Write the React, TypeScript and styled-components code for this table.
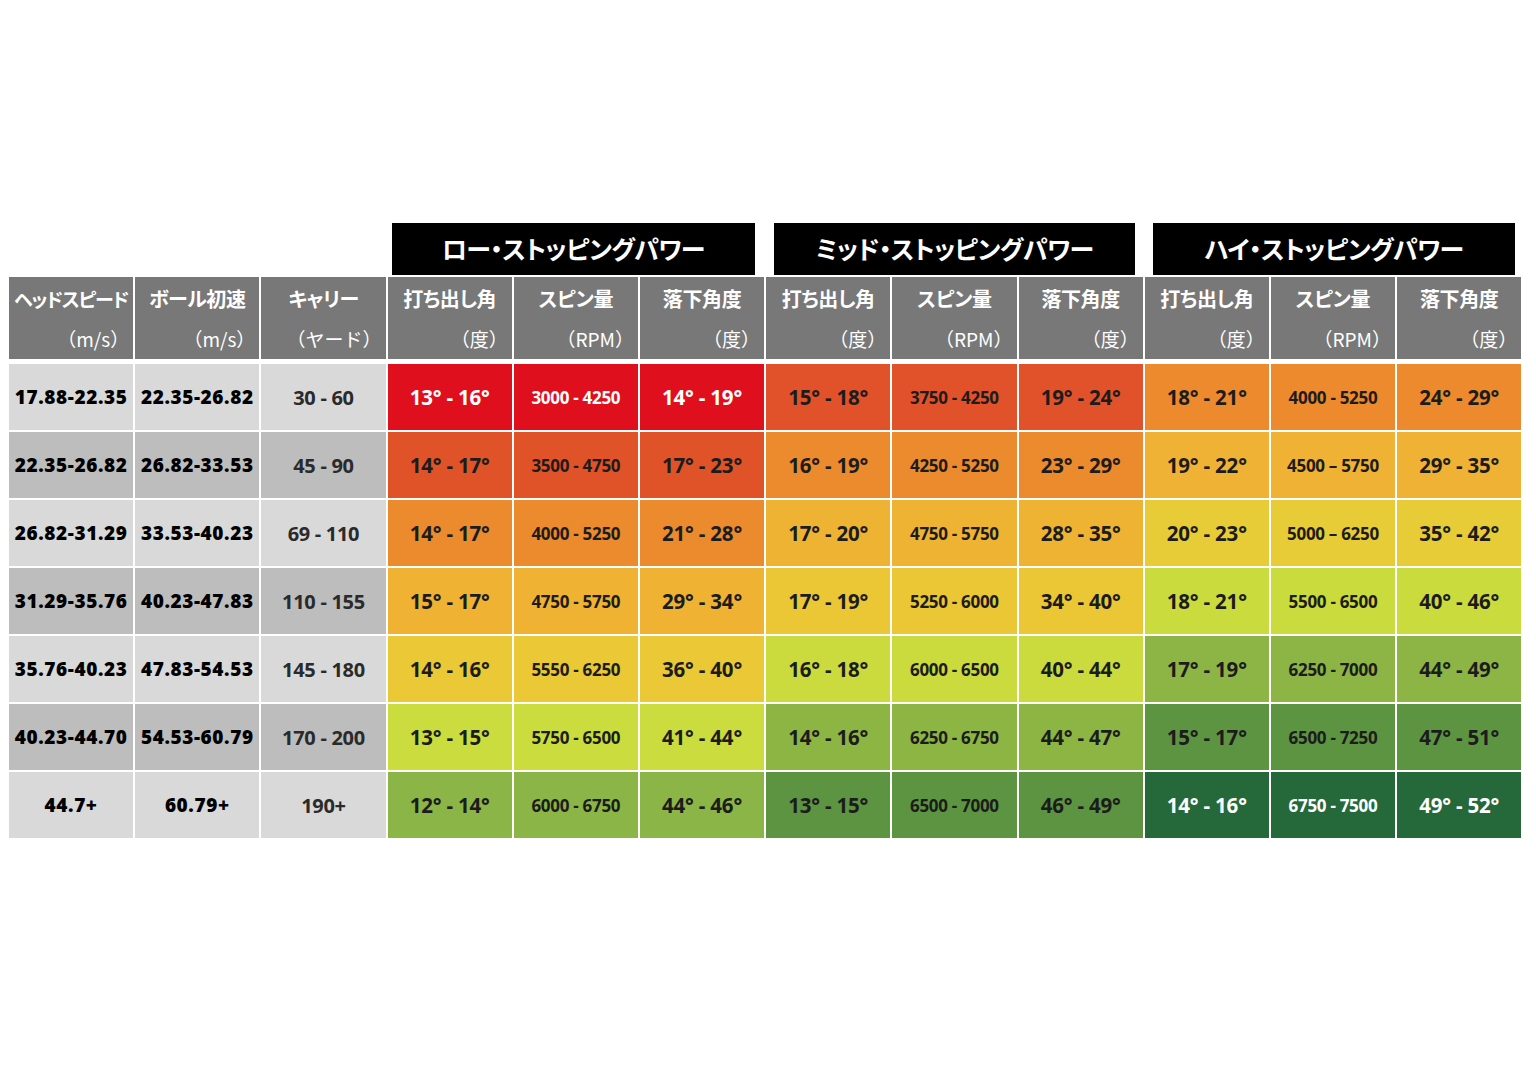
import React from "react";
import styled, { createGlobalStyle } from "styled-components";

const GlobalStyle = createGlobalStyle`
  html, body { margin: 0; padding: 0; background: #ffffff; }
  body { font-family: "Noto Sans CJK JP", "Open Sans", sans-serif; }
`;

const COLS = "repeat(12, 124.2px)";

const Page = styled.div`
  width: 1536px;
  height: 1075px;
  box-sizing: border-box;
  padding: 223px 0 0 9px;
  background: #ffffff;
`;

const Table = styled.div`
  display: flex;
  flex-direction: column;
`;

const GroupRow = styled.div`
  display: grid;
  grid-template-columns: ${COLS};
  column-gap: 2px;
  height: 52px;
  margin-bottom: 2px;
`;

const Spacer = styled.div`
  grid-column: span 3;
`;

const GroupTitle = styled.div<{ $l: number; $r: number }>`
  grid-column: span 3;
  margin: 0 ${(p) => p.$r}px 0 ${(p) => p.$l}px;
  background: #000000;
  color: #ffffff;
  display: flex;
  align-items: center;
  justify-content: center;
  font-family: "Noto Sans CJK JP", sans-serif;
  font-weight: 700;
  font-size: 25px;
  font-feature-settings: "palt";
  letter-spacing: -0.6px;
  padding-bottom: 2px;
`;

const HeadRow = styled.div`
  display: grid;
  grid-template-columns: ${COLS};
  column-gap: 2px;
  height: 82px;
  margin-bottom: 5px;
`;

const HeadCell = styled.div`
  background: #787878;
  color: #ffffff;
  display: flex;
  flex-direction: column;
  padding: 8px 0 6px;
  box-sizing: border-box;
  font-family: "Noto Sans CJK JP", sans-serif;
`;

const HeadTitle = styled.div<{ $tight?: boolean }>`
  height: 28px;
  line-height: 28px;
  text-align: center;
  font-size: ${(p) => (p.$tight ? "19px" : "20px")};
  font-weight: 700;
  font-feature-settings: "palt";
  letter-spacing: ${(p) => (p.$tight ? "-1.2px" : "-0.4px")};
  white-space: nowrap;
`;

const HeadUnit = styled.div`
  margin-top: 12px;
  height: 28px;
  line-height: 28px;
  text-align: right;
  padding-right: 4px;
  font-size: 19px;
  font-weight: 400;
  white-space: nowrap;
`;

const DataRow = styled.div`
  display: grid;
  grid-template-columns: ${COLS};
  column-gap: 2px;
  height: 66px;
  margin-bottom: 2px;
`;

const Cell = styled.div<{ $bg: string; $fg: string }>`
  background: ${(p) => p.$bg};
  color: ${(p) => p.$fg};
  display: flex;
  align-items: center;
  justify-content: center;
  font-family: "Open Sans", "Noto Sans", sans-serif;
  white-space: nowrap;
`;

const SpeedCell = styled(Cell)`
  font-size: 19px;
  font-weight: 800;
  letter-spacing: 0.6px;
`;

const CarryCell = styled(Cell)`
  font-size: 20px;
  font-weight: 700;
  letter-spacing: -0.3px;
`;

const AngleCell = styled(Cell)`
  font-size: 20.5px;
  font-weight: 700;
  letter-spacing: -0.2px;
`;

const RpmCell = styled(Cell)`
  font-size: 17px;
  font-weight: 700;
  letter-spacing: -0.3px;
`;

const headers: [string, string][] = [
  ["ヘッドスピード", "（m/s）"],
  ["ボール初速", "（m/s）"],
  ["キャリー", "（ヤード）"],
  ["打ち出し角", "（度）"],
  ["スピン量", "（RPM）"],
  ["落下角度", "（度）"],
  ["打ち出し角", "（度）"],
  ["スピン量", "（RPM）"],
  ["落下角度", "（度）"],
  ["打ち出し角", "（度）"],
  ["スピン量", "（RPM）"],
  ["落下角度", "（度）"],
];

type Row = {
  hs: string;
  bs: string;
  carry: string;
  vals: string[];
  colors: [string, string, string];
};

const rows: Row[] = [
  {
    hs: "17.88-22.35",
    bs: "22.35-26.82",
    carry: "30 - 60",
    vals: ["13° - 16°", "3000 - 4250", "14° - 19°", "15° - 18°", "3750 - 4250", "19° - 24°", "18° - 21°", "4000 - 5250", "24° - 29°"],
    colors: ["#df0f1d", "#e1522a", "#ec8a2d"],
  },
  {
    hs: "22.35-26.82",
    bs: "26.82-33.53",
    carry: "45 - 90",
    vals: ["14° - 17°", "3500 - 4750", "17° - 23°", "16° - 19°", "4250 - 5250", "23° - 29°", "19° - 22°", "4500 – 5750", "29° - 35°"],
    colors: ["#e05228", "#ec8a2e", "#efb234"],
  },
  {
    hs: "26.82-31.29",
    bs: "33.53-40.23",
    carry: "69 - 110",
    vals: ["14° - 17°", "4000 - 5250", "21° - 28°", "17° - 20°", "4750 - 5750", "28° - 35°", "20° - 23°", "5000 – 6250", "35° - 42°"],
    colors: ["#ec8a2e", "#efb334", "#e8cc37"],
  },
  {
    hs: "31.29-35.76",
    bs: "40.23-47.83",
    carry: "110 - 155",
    vals: ["15° - 17°", "4750 - 5750", "29° - 34°", "17° - 19°", "5250 - 6000", "34° - 40°", "18° - 21°", "5500 - 6500", "40° - 46°"],
    colors: ["#efb233", "#ebc736", "#cadb3d"],
  },
  {
    hs: "35.76-40.23",
    bs: "47.83-54.53",
    carry: "145 - 180",
    vals: ["14° - 16°", "5550 - 6250", "36° - 40°", "16° - 18°", "6000 - 6500", "40° - 44°", "17° - 19°", "6250 - 7000", "44° - 49°"],
    colors: ["#eac836", "#cbdb3d", "#8cb545"],
  },
  {
    hs: "40.23-44.70",
    bs: "54.53-60.79",
    carry: "170 - 200",
    vals: ["13° - 15°", "5750 - 6500", "41° - 44°", "14° - 16°", "6250 - 6750", "44° - 47°", "15° - 17°", "6500 - 7250", "47° - 51°"],
    colors: ["#cadc3e", "#8db544", "#5d9442"],
  },
  {
    hs: "44.7+",
    bs: "60.79+",
    carry: "190+",
    vals: ["12° - 14°", "6000 - 6750", "44° - 46°", "13° - 15°", "6500 - 7000", "46° - 49°", "14° - 16°", "6750 - 7500", "49° - 52°"],
    colors: ["#8bb546", "#5d9442", "#25693a"],
  },
];

const groups = [
  { title: "ロー・ストッピングパワー", l: 4, r: 9 },
  { title: "ミッド・ストッピングパワー", l: 8, r: 8 },
  { title: "ハイ・ストッピングパワー", l: 8, r: 6 },
];

export default function App() {
  return (
    <Page>
      <GlobalStyle />
      <Table>
        <GroupRow>
          <Spacer />
          {groups.map((g) => (
            <GroupTitle key={g.title} $l={g.l} $r={g.r}>
              {g.title}
            </GroupTitle>
          ))}
        </GroupRow>
        <HeadRow>
          {headers.map(([t, u], i) => (
            <HeadCell key={i}>
              <HeadTitle $tight={t.length > 6}>{t}</HeadTitle>
              <HeadUnit>{u}</HeadUnit>
            </HeadCell>
          ))}
        </HeadRow>
        {rows.map((r, ri) => {
          const grey = ri % 2 === 0 ? "#d9d9d9" : "#bdbdbd";
          return (
            <DataRow key={ri}>
              <SpeedCell $bg={grey} $fg="#000000">{r.hs}</SpeedCell>
              <SpeedCell $bg={grey} $fg="#000000">{r.bs}</SpeedCell>
              <CarryCell $bg={grey} $fg="#2a2a2a">{r.carry}</CarryCell>
              {r.vals.map((v, vi) => {
                const g = Math.floor(vi / 3);
                const bg = r.colors[g];
                const white = (ri === 0 && g === 0) || (ri === 6 && g === 2);
                const fg = white ? "#ffffff" : "#1c1c1c";
                return vi % 3 === 1 ? (
                  <RpmCell key={vi} $bg={bg} $fg={fg}>{v}</RpmCell>
                ) : (
                  <AngleCell key={vi} $bg={bg} $fg={fg}>{v}</AngleCell>
                );
              })}
            </DataRow>
          );
        })}
      </Table>
    </Page>
  );
}
